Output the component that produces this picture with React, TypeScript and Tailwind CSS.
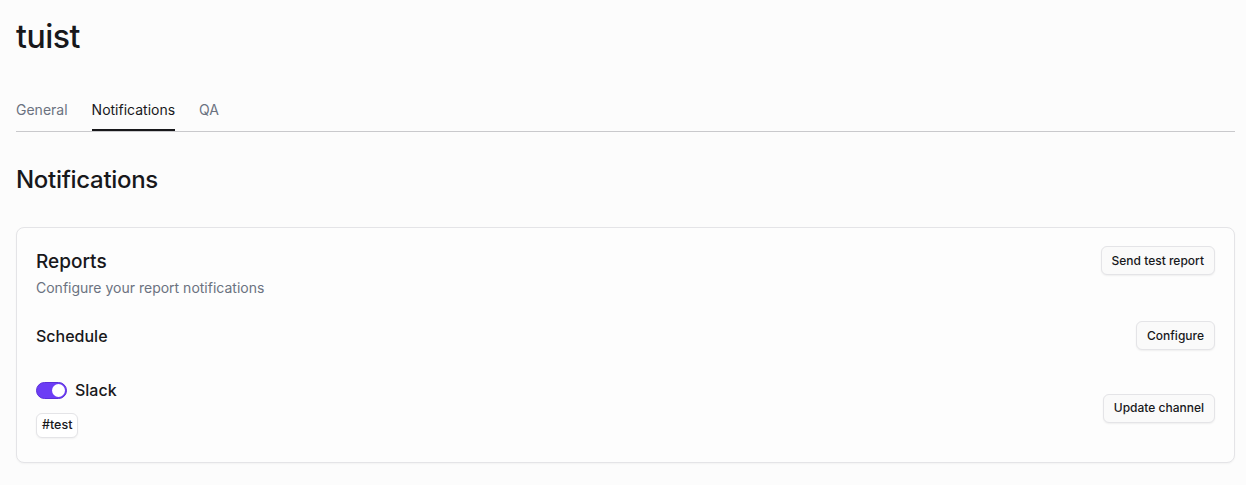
const font = { fontFamily: "Inter, 'Noto Sans', sans-serif" };

function Button({ children }: { children: React.ReactNode }) {
  return (
    <button className="h-[29px] px-[10px] rounded-md border border-[#e4e4e7] bg-[#fafafa] text-[12px] font-medium text-[#18181b] shadow-[0_1px_2px_rgba(0,0,0,0.06)]">
      {children}
    </button>
  );
}

export default function App() {
  return (
    <div className="min-h-screen bg-[#fcfcfc] text-[#18181b] pl-4 pr-[11px]" style={font}>
      <h1 className="pt-[17px] text-[32px] leading-[40px] font-medium tracking-[-0.5px]">tuist</h1>

      <nav className="mt-[42px] flex gap-6 border-b border-[#c9c9cc] text-[14px]">
        <span className="pb-[11px] text-[#6b7280]">General</span>
        <span className="pb-[9px] text-[#18181b] border-b-2 border-[#18181b]">Notifications</span>
        <span className="pb-[11px] text-[#6b7280]">QA</span>
      </nav>

      <h2 className="mt-[32px] text-[24px] leading-[32px] font-medium tracking-[-0.3px]">Notifications</h2>

      <section className="mt-[31px] rounded-lg border border-[#e4e4e7] bg-[#fdfdfd] px-[19px] pt-[18px] pb-[24px] shadow-[0_1px_2px_rgba(0,0,0,0.04)]">
        <div className="flex items-start justify-between">
          <div>
            <h3 className="mt-[2px] text-[19px] leading-[28px] font-medium">Reports</h3>
            <p className="mt-[2px] text-[14px] leading-[20px] text-[#6b7280]">Configure your report notifications</p>
          </div>
          <Button>Send test report</Button>
        </div>

        <div className="mt-[23px] flex items-center justify-between">
          <span className="text-[16px] font-medium">Schedule</span>
          <Button>Configure</Button>
        </div>

        <div className="mt-[28px] flex items-center justify-between">
          <div>
            <div className="flex items-center gap-[8px]">
              <span className="relative inline-flex h-[17px] w-[31px] rounded-full bg-[#6c3df5] border border-[#5b2fd9]">
                <span className="absolute right-[1px] top-[1px] h-[13px] w-[13px] rounded-full bg-white" />
              </span>
              <span className="text-[16px] font-medium">Slack</span>
            </div>
            <span className="mt-[11px] inline-flex h-[25px] items-center px-[5px] rounded-md border border-[#e4e4e7] bg-white text-[12.5px] font-medium shadow-[0_1px_2px_rgba(0,0,0,0.05)]">
              #test
            </span>
          </div>
          <Button>Update channel</Button>
        </div>
      </section>
    </div>
  );
}
